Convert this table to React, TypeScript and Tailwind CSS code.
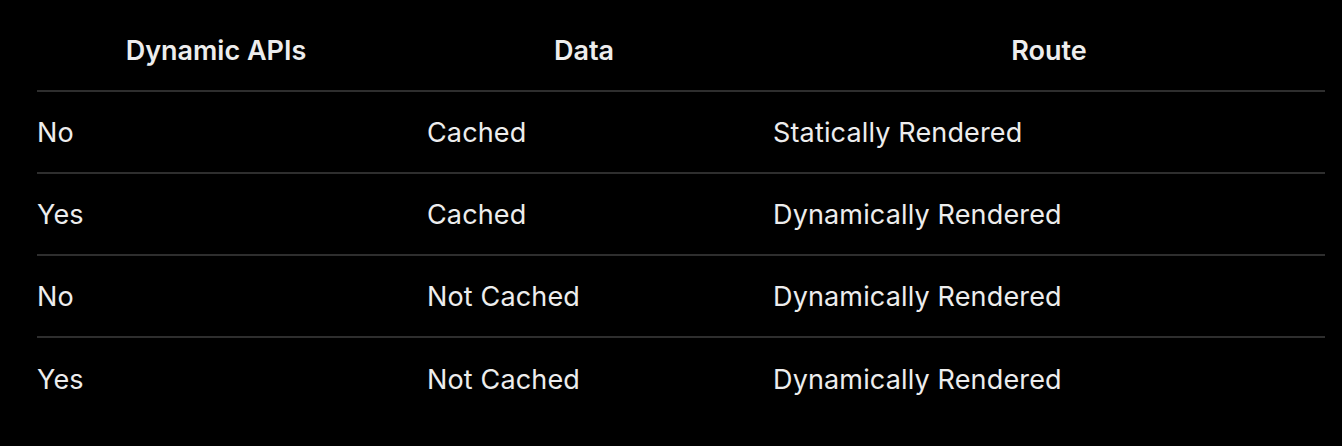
import React from "react";

const rows: [string, string, string][] = [
  ["No", "Cached", "Statically Rendered"],
  ["Yes", "Cached", "Dynamically Rendered"],
  ["No", "Not Cached", "Dynamically Rendered"],
  ["Yes", "Not Cached", "Dynamically Rendered"],
];

export default function App() {
  return (
    <div
      className="w-[1342px] h-[446px] bg-black text-[#ededed] pt-[10px] px-[37px]"
      style={{ fontFamily: "Inter, 'Noto Sans', sans-serif" }}
    >
      <div className="w-[1288px]">
        <div className="grid grid-cols-[374px_346px_568px] h-[82px] items-center border-b-2 border-[#2e2e2e] text-[27px] font-semibold leading-none">
          <div className="pr-[16px] text-center">Dynamic APIs</div>
          <div className="px-[16px] text-center">Data</div>
          <div className="pl-[16px] text-center">Route</div>
        </div>
        {rows.map((r, i) => (
          <div
            key={i}
            className={
              i < rows.length - 1
                ? "grid grid-cols-[374px_346px_568px] h-[82px] items-center border-b-2 border-[#2e2e2e] text-[27px] leading-none tracking-[0.15px]"
                : "grid grid-cols-[374px_346px_568px] h-[82px] items-center text-[27px] leading-none tracking-[0.15px]"
            }
          >
            <div className="pr-[16px]">{r[0]}</div>
            <div className="px-[16px]">{r[1]}</div>
            <div className="pl-[16px]">{r[2]}</div>
          </div>
        ))}
      </div>
    </div>
  );
}
